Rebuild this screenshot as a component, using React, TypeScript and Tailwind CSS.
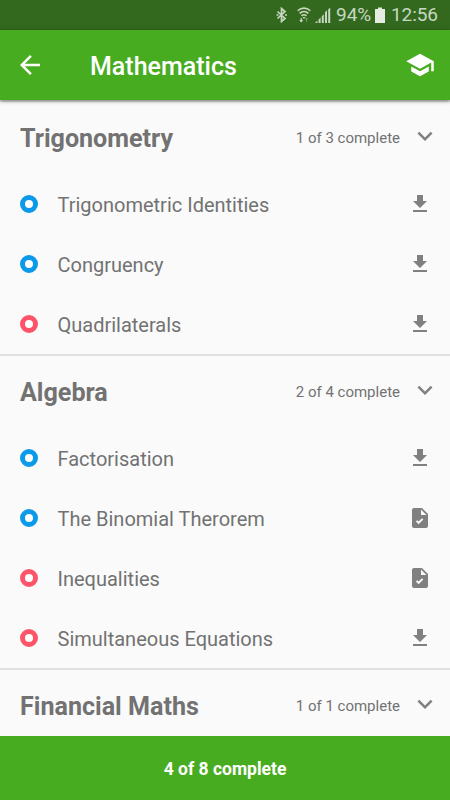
import React from 'react';

type Status = 'download' | 'done';

interface Topic {
  title: string;
  color: 'blue' | 'red';
  status: Status;
}

interface SectionProps {
  title: string;
  progress: string;
  topics: Topic[];
}

const sections: SectionProps[] = [
  {
    title: 'Trigonometry',
    progress: '1 of 3 complete',
    topics: [
      { title: 'Trigonometric Identities', color: 'blue', status: 'download' },
      { title: 'Congruency', color: 'blue', status: 'download' },
      { title: 'Quadrilaterals', color: 'red', status: 'download' },
    ],
  },
  {
    title: 'Algebra',
    progress: '2 of 4 complete',
    topics: [
      { title: 'Factorisation', color: 'blue', status: 'download' },
      { title: 'The Binomial Therorem', color: 'blue', status: 'done' },
      { title: 'Inequalities', color: 'red', status: 'done' },
      { title: 'Simultaneous Equations', color: 'red', status: 'download' },
    ],
  },
  {
    title: 'Financial Maths',
    progress: '1 of 1 complete',
    topics: [],
  },
];

function Icon({ d, className }: { d: string; className: string }) {
  return (
    <svg viewBox="0 0 24 24" fill="currentColor" className={className}>
      <path fillRule="evenodd" d={d} />
    </svg>
  );
}

function StatusBar() {
  return (
    <div className="h-[30px] shrink-0 bg-[#33691e] text-[#c8d7c2] flex items-center pl-[276px] text-[19px]">
      {/* Bluetooth */}
      <svg viewBox="0 0 11 16" className="w-[11px] h-4 shrink-0" fill="none" stroke="currentColor" strokeWidth="1.7">
        <path d="M1.5 4.5l7.5 7-3.5 3V1.5l3.5 3-7.5 7" />
        <path d="M0.5 8h2M9 8h2" />
      </svg>
      {/* Wifi */}
      <svg viewBox="0 0 14 16" className="w-3.5 h-4 ml-[10px] shrink-0" fill="none" stroke="currentColor" strokeWidth="1.6">
        <path d="M0.7 3.8C4.4 0.2 9.6 0.2 13.3 3.8M2.6 6.4C5.2 3.9 8.8 3.9 11.4 6.4M4.5 8.9C6 7.5 8 7.5 9.5 8.9" />
        <path d="M5.5 10h3L7 12z" fill="currentColor" stroke="none" />
        <path d="M4.2 11v4M2.8 13.2l1.4 1.5 1.4-1.5" strokeWidth="1.2" />
        <path d="M9.6 15v-4M8.3 12.5l1.3-1.4 1.3 1.4" strokeWidth="1" opacity="0.4" />
      </svg>
      {/* Signal */}
      <svg viewBox="0 0 16 16" className="w-4 h-4 ml-1 shrink-0" fill="currentColor">
        <path d="M0 16l2.4-2.4V16zM3.6 12.6l2-2V16h-2zM6.8 9.2l2-2V16h-2zM10 5.2l2-2V16h-2zM13.2 2.4l2-2V16h-2z" />
      </svg>
      <span className="ml-[5px] w-[35px] whitespace-nowrap">94%</span>
      {/* Battery */}
      <svg viewBox="0 0 10 16" className="w-[10px] h-4 ml-1 shrink-0" fill="#e4ece1">
        <path d="M3 0.5h4V2h3v14H0V2h3z" />
      </svg>
      <span className="ml-[6px] whitespace-nowrap tracking-[-0.1px]">12:56</span>
    </div>
  );
}

function Header() {
  return (
    <header className="relative z-10 h-[70px] shrink-0 bg-[#48ac21] text-white flex items-center px-[15px] shadow-[0_1px_4px_rgba(0,0,0,0.5)]">
      <Icon d="M20 11H7.83l5.59-5.59L12 4l-8 8 8 8 1.41-1.41L7.83 13H20v-2z" className="size-[30px]" />
      <h1 className="ml-[45px] mt-[3px] text-[25px] font-medium">Mathematics</h1>
      <Icon
        d="M5 13.18v4L12 21l7-3.82v-4L12 17l-7-3.82zM12 3L1 9l11 6 9-4.91V17h2V9L12 3z"
        className="size-[30px] ml-auto"
      />
    </header>
  );
}

function TopicRow({ title, color, status }: Topic) {
  return (
    <li className="h-[60px] flex items-center pl-5 pr-[18px]">
      <span
        className={`size-[18px] rounded-full border-[5px] bg-white ${
          color === 'blue' ? 'border-[#0b9ae9]' : 'border-[#fd5469]'
        }`}
      />
      <span className="ml-[19.5px] mt-0.5 text-xl">{title}</span>
      {status === 'download' ? (
        <Icon
          d="M19 9h-4V3H9v6H5l7 7 7-7zM5 18v2h14v-2H5z"
          className="size-6 ml-auto -mt-px text-[#808080]"
        />
      ) : (
        <Icon
          d="M14 2H6c-1.1 0-2 .9-2 2v16c0 1.1.9 2 2 2h12c1.1 0 2-.9 2-2V8l-6-6zM13 3.5V9h5.5zM10.6 18.2l-2.7-2.7 1.3-1.3 1.4 1.4 3.4-3.4 1.3 1.3z"
          className="size-6 ml-auto -mt-px text-[#808080]"
        />
      )}
    </li>
  );
}

function Section({ title, progress, topics }: SectionProps) {
  return (
    <section className="border-t-2 border-[#e0e0e0]">
      <div className="h-[72px] flex items-center pl-5 pr-[10px]">
        <h2 className="mt-0.5 text-[25.1px] font-bold">{title}</h2>
        <span className="ml-auto text-[15px]">{progress}</span>
        <Icon
          d="M16.59 8.59L12 13.17 7.41 8.59 6 10l6 6 6-6z"
          className="size-[30px] ml-[10px] -mt-1 text-[#808080]"
        />
      </div>
      <ul>
        {topics.map((topic) => (
          <TopicRow key={topic.title} {...topic} />
        ))}
      </ul>
    </section>
  );
}

export default function App() {
  return (
    <div className="w-[450px] h-[800px] flex flex-col overflow-hidden bg-[#fafafa] font-['Roboto',sans-serif]">
      <StatusBar />
      <Header />
      <main className="flex-1 min-h-0 overflow-hidden text-[#727272]">
        {sections.map((section) => (
          <Section key={section.title} {...section} />
        ))}
      </main>
      <footer className="h-16 shrink-0 pt-0.5 bg-[#48ac21] text-white text-[17.5px] font-bold flex items-center justify-center">
        4 of 8 complete
      </footer>
    </div>
  );
}
